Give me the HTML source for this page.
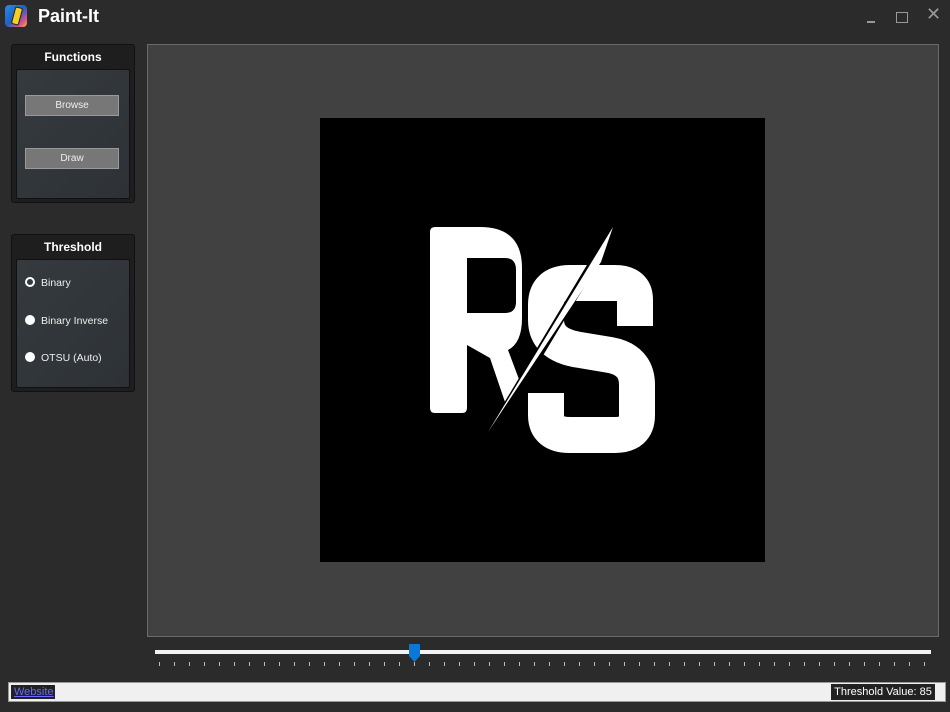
<!DOCTYPE html>
<html><head><style>
body{margin:0;width:950px;height:712px;background:#2b2b2b;font-family:"Liberation Sans",sans-serif;overflow:hidden;position:relative}
.abs{position:absolute}
.grp{position:absolute;left:11px;width:122px;background:#1e1e1e;border:1px solid #111;border-radius:3px}
.grp .t{color:#fff;font-weight:bold;font-size:12px;text-align:center;margin-top:5px}
.inner{position:absolute;left:4px;right:4px;background:linear-gradient(135deg,#353a3e,#2e3236);border:1px solid #111;border-radius:2px}
.btn{position:absolute;left:8px;width:94px;height:21px;background:#777;border:1px solid #999;color:#eee;font-size:10px;text-align:center;line-height:19px;box-sizing:border-box}
.rad{position:absolute;left:8px;color:#eee;font-size:10.5px;white-space:nowrap}
.rad i{display:inline-block;width:10px;height:10px;border-radius:50%;background:#fff;vertical-align:-1px;margin-right:6px;box-sizing:border-box}
</style></head><body>
<div class="abs" style="left:5px;top:5px;width:22px;height:22px;border-radius:4px;background:linear-gradient(135deg,#2a8de0,#1f5fc9 50%,#e0508a 80%,#f0c030)">
<div class="abs" style="left:8px;top:2px;width:6px;height:16px;background:#f5d020;transform:rotate(15deg);border:1px solid #222;border-radius:2px"></div></div>
<div class="abs" style="left:38px;top:6px;color:#fff;font-weight:bold;font-size:18px">Paint-It</div>
<div class="abs" style="left:867px;top:21px;width:8px;height:2px;background:#999"></div>
<div class="abs" style="left:896px;top:12px;width:10px;height:9px;border:1px solid #999"></div>
<div class="abs" style="left:926px;top:4px;color:#999;font-size:18px">✕</div>

<div class="grp" style="top:44px;height:157px"><div class="t">Functions</div>
<div class="inner" style="top:24px;bottom:3px">
<div class="btn" style="top:25px">Browse</div>
<div class="btn" style="top:78px">Draw</div></div></div>

<div class="grp" style="top:234px;height:156px"><div class="t">Threshold</div>
<div class="inner" style="top:24px;bottom:3px">
<div class="rad" style="top:17px"><i style="background:none;border:2px solid #fff"></i>Binary</div>
<div class="rad" style="top:55px"><i></i>Binary Inverse</div>
<div class="rad" style="top:92px"><i></i>OTSU (Auto)</div></div></div>

<div class="abs" style="left:147px;top:44px;width:790px;height:591px;background:#414141;border:1px solid #6a6a6a"></div>
<svg class="abs" style="left:320px;top:118px" width="445" height="444" viewBox="320 118 445 444">
<rect x="320" y="118" width="445" height="444" fill="#000"/>
<path fill="#fff" fill-rule="evenodd" d="M430,232 Q430,227 435,227 L480,227 Q522,227 522,268 L522,318 Q522,343 508,350 L520,382 L506,405 L490,358 L467,345 L467,408 Q467,413 462,413 L435,413 Q430,413 430,408 Z M467,258 L505,258 Q516,258 516,270 L516,302 Q516,313 505,313 L467,313 Z"/>
<path fill="none" stroke="#fff" stroke-width="36" stroke-linejoin="round" d="M635,326 L635,300 Q635,283 615,283 L570,283 Q546,283 546,305 L546,320 Q546,345 580,350 L610,355 Q637,360 637,385 L637,415 Q637,435 615,435 L570,435 Q546,435 546,415 L546,393"/>
<line x1="618" y1="222" x2="487" y2="440" stroke="#000" stroke-width="9"/>
<polygon fill="#fff" points="613,227 601,262 488,432"/>
</svg>

<div class="abs" style="left:155px;top:650px;width:776px;height:4px;background:#f2f2f2"></div>
<div class="abs" style="left:159px;top:662px;width:775px;height:4px;background:repeating-linear-gradient(90deg,#bbb 0 1px,transparent 1px 15px)"></div>
<svg class="abs" style="left:409px;top:644px" width="11" height="18"><path d="M0,1 Q0,0 1,0 L10,0 Q11,0 11,1 L11,12 L5.5,18 L0,12 Z" fill="#0a78d7"/></svg>

<div class="abs" style="left:8px;top:682px;width:938px;height:20px;background:#f0f0f0;border:1px solid #999;box-sizing:border-box"></div>
<div class="abs" style="left:11px;top:685px;width:44px;height:14px;background:#222;color:#6a6aff;font-size:11px;text-decoration:underline;line-height:14px;padding-left:3px;box-sizing:border-box">Website</div>
<div class="abs" style="left:831px;top:684px;width:104px;height:16px;background:#222;color:#fff;font-size:11px;line-height:16px;text-align:center;white-space:nowrap">Threshold Value: 85</div>
</body></html>
